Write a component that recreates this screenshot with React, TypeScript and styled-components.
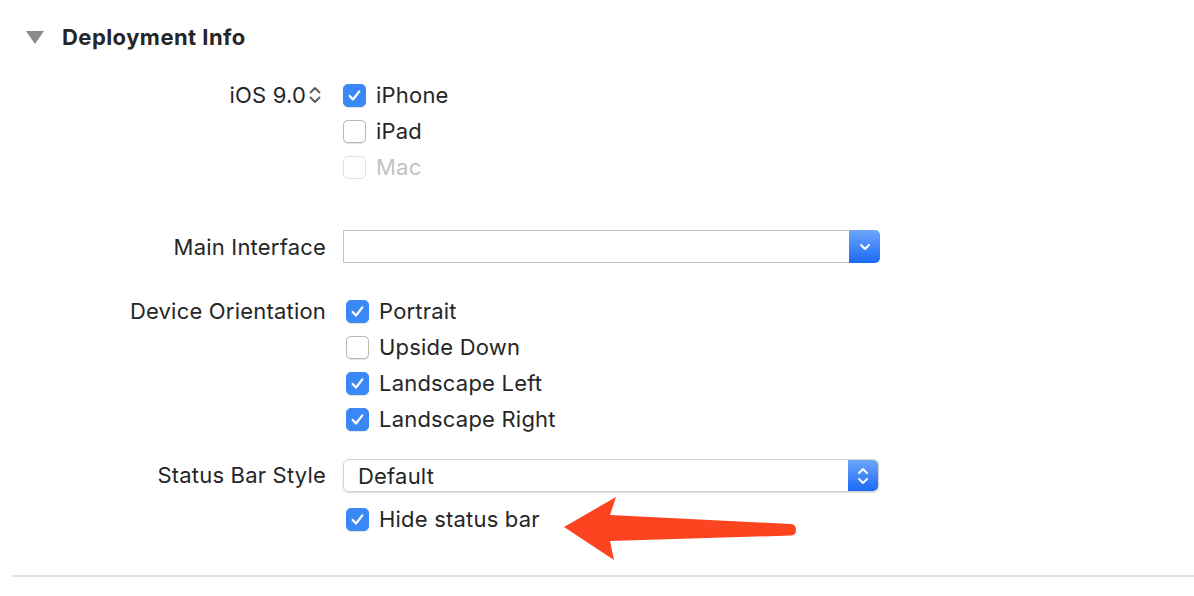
import React from "react";
import styled, { createGlobalStyle } from "styled-components";

const GlobalStyle = createGlobalStyle`
  html, body {
    margin: 0;
    padding: 0;
    background: #ffffff;
  }
  body {
    font-family: Inter, "Liberation Sans", sans-serif;
    color: #262626;
  }
`;

type CheckItem = { label: string; checked?: boolean; disabled?: boolean };

const Check = ({ checked, disabled }: { checked?: boolean; disabled?: boolean }) => (
  <CheckBox $checked={checked} $disabled={disabled}>
    {checked && (
      <svg width="15" height="15" viewBox="0 0 14 14">
        <path d="M2.5 7.4 L5.6 10.7 L11.5 3.1" fill="none" stroke="#fff" strokeWidth="2.1" strokeLinecap="round" strokeLinejoin="round" />
      </svg>
    )}
  </CheckBox>
);

const CheckList = ({ items, indent }: { items: CheckItem[]; indent?: number }) => (
  <List $indent={indent}>
    {items.map((it) => (
      <CheckRow key={it.label}>
        <Check checked={it.checked} disabled={it.disabled} />
        <CheckLabel $disabled={it.disabled}>{it.label}</CheckLabel>
      </CheckRow>
    ))}
  </List>
);

const App = () => {
  return (
    <>
      <GlobalStyle />
      <Page>
        <Header>
          <Disclosure />
          <Title>Deployment Info</Title>
        </Header>

        <Row $gap={22}>
          <Label>
            iOS 9.0
            <svg width="16" height="20" viewBox="0 0 16 20" style={{ marginLeft: 1, marginRight: 3 }}>
              <path d="M3.5 7.5 L8 3 L12.5 7.5" fill="none" stroke="#5a5a5a" strokeWidth="1.8" strokeLinecap="round" strokeLinejoin="round" />
              <path d="M3.5 12.5 L8 17 L12.5 12.5" fill="none" stroke="#5a5a5a" strokeWidth="1.8" strokeLinecap="round" strokeLinejoin="round" />
            </svg>
          </Label>
          <CheckList
            items={[
              { label: "iPhone", checked: true },
              { label: "iPad" },
              { label: "Mac", disabled: true },
            ]}
          />
        </Row>

        <Row $gap={44}>
          <Label>Main Interface</Label>
          <Combo>
            <ComboField />
            <ComboButton>
              <svg width="14" height="10" viewBox="0 0 14 10">
                <path d="M3 3 L7 7 L11 3" fill="none" stroke="#fff" strokeWidth="2" strokeLinecap="round" strokeLinejoin="round" />
              </svg>
            </ComboButton>
          </Combo>
        </Row>

        <Row $gap={28}>
          <Label>Device Orientation</Label>
          <CheckList
            indent={3}
            items={[
              { label: "Portrait", checked: true },
              { label: "Upside Down" },
              { label: "Landscape Left", checked: true },
              { label: "Landscape Right", checked: true },
            ]}
          />
        </Row>

        <Row $gap={20}>
          <Label>Status Bar Style</Label>
          <Popup>
            <PopupText>Default</PopupText>
            <PopupButton>
              <svg width="14" height="22" viewBox="0 0 14 22">
                <path d="M3 8 L7 4 L11 8" fill="none" stroke="#fff" strokeWidth="1.9" strokeLinecap="round" strokeLinejoin="round" />
                <path d="M3 14 L7 18 L11 14" fill="none" stroke="#fff" strokeWidth="1.9" strokeLinecap="round" strokeLinejoin="round" />
              </svg>
            </PopupButton>
          </Popup>
        </Row>

        <Row $gap={8}>
          <Label />
          <CheckList indent={3} items={[{ label: "Hide status bar", checked: true }]} />
        </Row>

        <Divider />

        <Arrow width="240" height="70" viewBox="0 0 240 70">
          <path
            d="M4 33 L56 3 L50 21 L231 30 Q236 30.5 236 36 Q236 41 231 41.5 L50 47 L54 66 Z"
            fill="#fd4420"
            strokeLinejoin="round"
          />
        </Arrow>
      </Page>
    </>
  );
};

export default App;

// Styles

const Page = styled.div`
  position: relative;
  width: 1194px;
  height: 596px;
  overflow: hidden;
  padding-top: 19px;
  box-sizing: border-box;
`;

const Header = styled.div`
  height: 36px;
  display: flex;
  align-items: center;
  padding-left: 26px;
  gap: 18px;
`;

const Disclosure = styled.div`
  width: 0;
  height: 0;
  border-left: 9px solid transparent;
  border-right: 9px solid transparent;
  border-top: 13px solid #8a8a8a;
  margin-top: 1px;
`;

const Title = styled.div`
  font-size: 22px;
  font-weight: 700;
  color: #262626;
  letter-spacing: 0.45px;
`;

const Row = styled.div<{ $gap: number }>`
  display: grid;
  grid-template-columns: 326px 1fr;
  column-gap: 17px;
  align-items: start;
  margin-top: ${(p) => p.$gap}px;
`;

const Label = styled.div`
  height: 36px;
  display: flex;
  align-items: center;
  justify-content: flex-end;
  font-size: 22px;
  letter-spacing: 0.2px;
  color: #262626;
  white-space: nowrap;
`;

const List = styled.div<{ $indent?: number }>`
  display: flex;
  flex-direction: column;
  padding-left: ${(p) => p.$indent ?? 0}px;
`;

const CheckRow = styled.div`
  height: 36px;
  display: flex;
  align-items: center;
  gap: 10px;
`;

const CheckBox = styled.div<{ $checked?: boolean; $disabled?: boolean }>`
  width: 23px;
  height: 23px;
  box-sizing: border-box;
  border-radius: 5px;
  display: flex;
  align-items: center;
  justify-content: center;
  background: ${(p) => (p.$checked ? "#3a87f6" : "#ffffff")};
  border: 1px solid
    ${(p) => (p.$checked ? "#3a87f6" : p.$disabled ? "#e2e2e2" : "#b9b9b9")};
  box-shadow: ${(p) => (p.$disabled ? "none" : "0 0.5px 1px rgba(0, 0, 0, 0.12)")};
`;

const CheckLabel = styled.span<{ $disabled?: boolean }>`
  font-size: 22px;
  letter-spacing: 0.2px;
  color: ${(p) => (p.$disabled ? "#c2c2c2" : "#262626")};
  white-space: nowrap;
`;

const Combo = styled.div`
  width: 537px;
  height: 33px;
  margin-top: 1px;
  display: flex;
`;

const ComboField = styled.div`
  flex: 1;
  border: 1px solid #c4c4c4;
  border-right: none;
  background: #fff;
`;

const ComboButton = styled.div`
  width: 31px;
  border-radius: 0 5px 5px 0;
  background: linear-gradient(#6ea6fb, #1a6af6);
  display: flex;
  align-items: center;
  justify-content: center;
`;

const Popup = styled.div`
  width: 536px;
  height: 33px;
  box-sizing: border-box;
  border: 1px solid #d2d2d2;
  border-radius: 6px;
  box-shadow: 0 1px 1.5px rgba(0, 0, 0, 0.15);
  display: flex;
  align-items: center;
  overflow: hidden;
  margin-top: 2px;
`;

const PopupText = styled.div`
  flex: 1;
  padding-left: 14px;
  font-size: 22px;
  letter-spacing: 0.2px;
  color: #262626;
`;

const PopupButton = styled.div`
  width: 30px;
  height: 100%;
  background: linear-gradient(#6ea6fb, #1a6af6);
  display: flex;
  align-items: center;
  justify-content: center;
`;

const Divider = styled.div`
  margin: 38px 0 0 12px;
  height: 2px;
  background: #e3e3e3;
`;

const Arrow = styled.svg`
  position: absolute;
  left: 560px;
  top: 494px;
`;
